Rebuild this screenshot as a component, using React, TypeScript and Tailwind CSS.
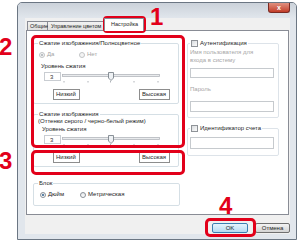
import React from "react";

function Radio({ checked, disabled }: { checked?: boolean; disabled?: boolean }) {
  return (
    <span
      className={`flex h-[6px] w-[6px] shrink-0 items-center justify-center rounded-full border ${
        disabled ? "border-[#c2c4c6] bg-[#f4f4f4]" : "border-[#8a9097] bg-gradient-to-b from-[#e4e7ea] to-white"
      }`}
    >
      {checked && (
        <span className={`h-[2px] w-[2px] rounded-full ${disabled ? "bg-[#aab0b6]" : "bg-[#2b5f8e]"}`} />
      )}
    </span>
  );
}

function Option({ label, checked, disabled }: { label: string; checked?: boolean; disabled?: boolean }) {
  return (
    <span className={`flex w-[40px] items-center gap-[2px] whitespace-nowrap ${disabled ? "text-[#a4a4a4]" : ""}`}>
      <Radio checked={checked} disabled={disabled} />
      {label}
    </span>
  );
}

function Check() {
  return <span className="h-[7px] w-[7px] shrink-0 border border-[#8f9398] bg-gradient-to-br from-[#d9dcdf] to-[#fbfbfb]" />;
}

function Slider() {
  return (
    <div className="mt-[2px] flex h-[11px] items-start">
      <div className="ml-[10px] h-[9px] w-[17px] border border-[#c9cdd2] pl-[5px] leading-[8px] text-[#333]">3</div>
      <svg width="99" height="11" className="ml-[1px]">
        <rect x="0.5" y="2.5" width="97" height="2" fill="#e9ebed" stroke="#b3b7bc" strokeWidth="0.8" />
        {[2, 26, 48.5, 72, 96].map((x) => (
          <line key={x} x1={x} x2={x} y1="9" y2="10.5" stroke="#9aa0a6" strokeWidth="0.8" />
        ))}
        <path d="M46.5 0.5 H51.5 V6 L49 8.5 L46.5 6 Z" fill="#eef1f4" stroke="#6f7780" strokeWidth="0.8" />
      </svg>
    </div>
  );
}

function Scale() {
  return (
    <div className="mt-[6px] flex h-[11px]">
      <span className="ml-[19px] w-[27px] border border-[#8d8d8d] pl-[2px] pt-[1px]">Низкий</span>
      <span className="ml-[59px] w-[31px] border border-[#8d8d8d] pl-[2px] pt-[1px]">Высокая</span>
    </div>
  );
}

function TextBox({ h, mt }: { h: string; mt: string }) {
  return <div className={`ml-[2px] w-[84px] border border-[#c6cace] bg-white ${h} ${mt}`} />;
}

function Button({ label, primary }: { label: string; primary?: boolean }) {
  return (
    <div
      className={`flex h-[10px] items-center justify-center rounded-[2px] border ${
        primary
          ? "w-[36px] border-[#3c7fb1] bg-gradient-to-b from-[#e5f4fc] to-[#b6dcf3]"
          : "w-[35px] border-[#707070] bg-gradient-to-b from-[#f3f3f3] to-[#d4d4d4]"
      }`}
    >
      {label}
    </div>
  );
}

export default function App() {
  return (
    <div className="relative h-[241px] w-[298px] overflow-hidden bg-white font-['Liberation_Sans',Arial,sans-serif] text-[6px] leading-[7px] text-[#1e1e1e]">
      {/* dialog window */}
      <div className="ml-[17px] mt-[2px] flex h-[238px] w-[280px] flex-col rounded-t-[5px] border border-[#6b7683] bg-[#e1e6ec]">
        <div className="flex h-[15px] shrink-0 justify-end rounded-t-[4px] bg-gradient-to-b from-[#cbd2da] to-[#e1e6ec] pr-[6px]">
          <div className="flex h-[10px] w-[22px] items-center justify-center rounded-b-[3px] border border-t-0 border-[#7a2a22] bg-gradient-to-b from-[#e0907f] to-[#c23b27] text-[7px] font-bold text-white">
            x
          </div>
        </div>

        <div className="ml-[7px] mr-[6px] flex h-[216px] flex-col bg-[#f0f0f0]">
          {/* tabs */}
          <div className="flex h-[12px] items-end whitespace-nowrap pl-[2px] text-[5.5px]">
            <div className="h-[9px] w-[21px] border border-b-0 border-[#898c95] bg-gradient-to-b from-[#f2f2f2] to-[#e0e0e0] pl-[2px] pt-[1px]">Общие</div>
            <div className="h-[9px] w-[56px] border border-b-0 border-l-0 border-[#898c95] bg-gradient-to-b from-[#f2f2f2] to-[#e0e0e0] pl-[3px] pt-[1px]">Управление цветом</div>
            <div className="relative z-[1] -mb-[1px] h-[13px] w-[40px] border border-b-0 border-[#898c95] bg-white pl-[6px] pt-[2px]">Настройка</div>
          </div>

          {/* tab page */}
          <div className="mx-[1px] flex h-[185px] gap-[7px] border border-[#898c95] bg-white pl-[6px] pt-[9px]">
            <div className="flex w-[147px] flex-col">
              <fieldset className="w-[146px] rounded-[2px] border border-[#d5dfe5] pb-[3px]">
                <legend className="ml-[4px] px-[1px]">Сжатие изображения/Полноцветное</legend>
                <div className="mt-[4px] flex h-[7px] items-center pl-[5px]">
                  <Option label="Да" checked disabled />
                  <Option label="Нет" disabled />
                </div>
                <div className="ml-[7px] mt-[5px]">Уровень сжатия</div>
                <Slider />
                <Scale />
              </fieldset>

              <fieldset className="mt-[7px] w-[146px] rounded-[2px] border border-[#d5dfe5] pb-[3px]">
                <legend className="ml-[4px] px-[1px]">Сжатие изображения</legend>
                <div className="ml-[4px]">(Оттенки серого / черно-белый режим)</div>
                <div className="ml-[8px] mt-[1px]">Уровень сжатия</div>
                <div className="mt-[1px]">
                  <Slider />
                </div>
                <Scale />
              </fieldset>

              <fieldset className="mt-[13px] w-[147px] rounded-[2px] border border-[#d5dfe5] pb-[7px]">
                <legend className="ml-[4px] px-[1px]">Блок</legend>
                <div className="mt-[4px] flex h-[7px] items-center pl-[6px]">
                  <Option label="Дюйм" checked />
                  <Option label="Метрическая" />
                </div>
              </fieldset>
            </div>

            <div className="flex w-[92px] flex-col">
              <fieldset className="rounded-[2px] border border-[#dde3e9] pb-[5px]">
                <legend className="ml-[2px] px-[1px]">
                  <span className="flex items-center gap-[2px]">
                    <Check />
                    Аутентификация
                  </span>
                </legend>
                <div className="ml-[2px] mt-[1px] leading-[8px] text-[#a6a6a6]">
                  Имя пользователя для
                  <br />
                  входа в систему
                </div>
                <TextBox h="h-[10px]" mt="mt-[4px]" />
                <div className="ml-[2px] mt-[8px] text-[#a6a6a6]">Пароль</div>
                <TextBox h="h-[11px]" mt="mt-[8px]" />
              </fieldset>

              <fieldset className="mt-[7px] rounded-[2px] border border-[#dde3e9] pb-[6px]">
                <legend className="ml-[2px] px-[1px]">
                  <span className="flex items-center gap-[2px]">
                    <Check />
                    Идентификатор счета
                  </span>
                </legend>
                <TextBox h="h-[12px]" mt="mt-[5px]" />
              </fieldset>
            </div>
          </div>

          <div className="mt-[8px] flex justify-end gap-[7px]">
            <Button label="OK" primary />
            <Button label="Отмена" />
          </div>
        </div>
      </div>

      {/* callouts */}
      <div className="absolute left-[103px] top-[16px] h-[17px] w-[43px] rounded-[4px] border-[3px] border-[#e2001a]" />
      <div className="absolute left-[31px] top-[35px] h-[113px] w-[154px] rounded-[5px] border-[3px] border-[#e2001a]" />
      <div className="absolute left-[31px] top-[150px] h-[25px] w-[154px] rounded-[5px] border-[3px] border-[#e2001a]" />
      <div className="absolute left-[205px] top-[218px] h-[19px] w-[51px] rounded-[5px] border-[3px] border-[#e2001a]" />
      <span className="absolute left-[150px] top-[5px] text-[24px] font-bold leading-[24px] text-[#e2001a]">1</span>
      <span className="absolute left-[-1px] top-[35px] text-[24px] font-bold leading-[24px] text-[#e2001a]">2</span>
      <span className="absolute left-[-1px] top-[149px] text-[24px] font-bold leading-[24px] text-[#e2001a]">3</span>
      <span className="absolute left-[219px] top-[194px] text-[24px] font-bold leading-[24px] text-[#e2001a]">4</span>
    </div>
  );
}
